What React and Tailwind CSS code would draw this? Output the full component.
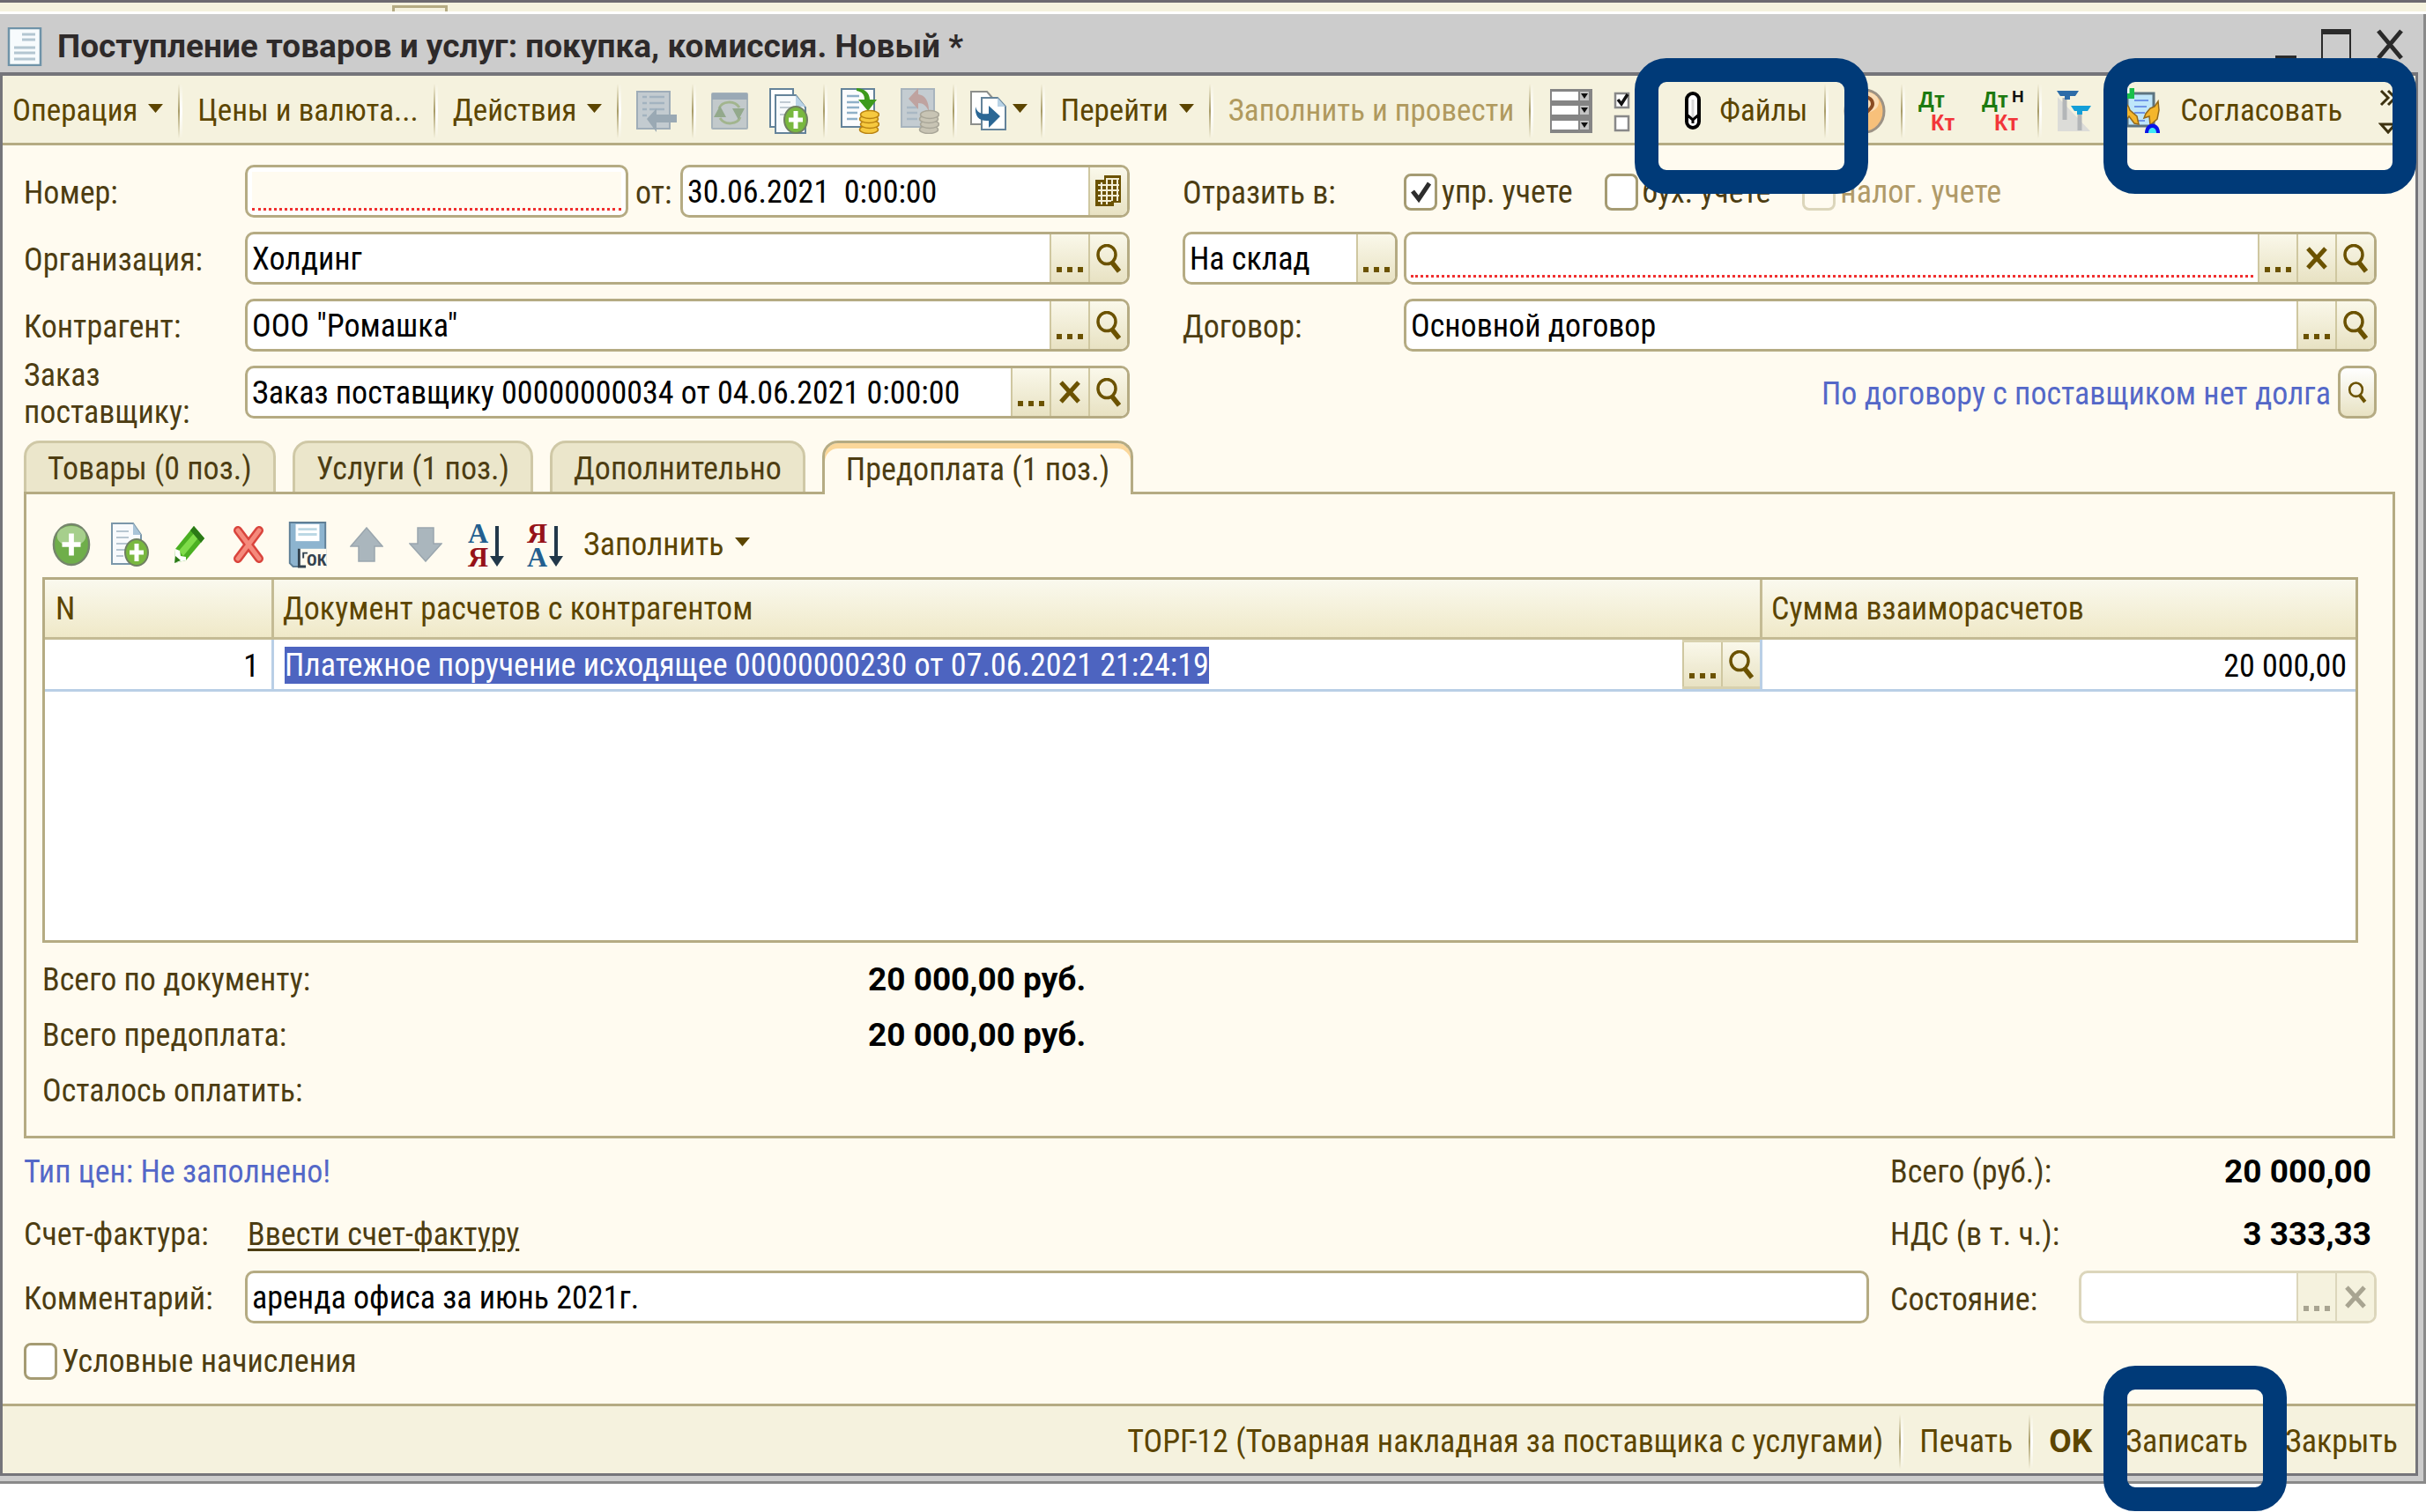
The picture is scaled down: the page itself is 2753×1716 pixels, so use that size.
const Caret = () => (
    <svg className="w-[17px] h-[10px] mb-[6px]" viewBox="0 0 17 10"><path d="M0 0h17L8.500 10z" fill="#5c4500" /></svg>
);

const Sep = () => (
    <span className="flex shrink-0 h-[62px]">
        <span className="w-[2px] bg-linear-to-b from-transparent via-[#a89c68] to-transparent"></span>
        <span className="w-[3px] bg-linear-to-b from-transparent via-white to-transparent"></span>
    </span>
);

const PostIcon = () => (
    <svg className="w-[46px] h-[50px]" viewBox="0 0 46 50">
        <path d="M1 3h37v42H1z" fill="#c3cbd0" stroke="#9fadb8" strokeWidth="2" />
        <path d="M7 9h5M15 9h17M7 16h5M15 16h17M7 23h5M15 23h17M7 30h5" stroke="#a3b3c0" strokeWidth="2.500" />
        <path d="M12 34 23 22v7h23v9H23v11z" fill="#9aa9b4" />
    </svg>
);

const RefreshIcon = () => (
    <svg className="w-[42px] h-[50px]" viewBox="0 0 42 50">
        <rect x="1" y="5" width="40" height="40" rx="1" fill="#c2c9cb" stroke="#a7b3ba" strokeWidth="2" />
        <path d="M1 5h40v7H1z" fill="#9aa9b5" />
        <path d="M9 22c3-8 17-10 23-1M33 32c-3 8-17 10-23 1" fill="none" stroke="#a2b58e" strokeWidth="3" />
        <path d="M3 32 10 19l7 13zM24 22h14l-7 13z" fill="#93a98c" />
    </svg>
);

const PlusBadge = ({ cx, cy, rx, ry }) => (
    <g>
        <ellipse cx={cx} cy={cy} rx={rx} ry={ry} fill="#79b83f" stroke="#6f7f62" strokeWidth="2" />
        <path d={`M${cx - rx + 5} ${cy}H${cx + rx - 5}M${cx} ${cy - ry + 5}V${cy + ry - 5}`} stroke="#fff" strokeWidth="5" />
    </g>
);

const CopyIcon = () => (
    <svg className="w-[44px] h-[52px]" viewBox="0 0 44 52">
        <path d="M1 1h26v43H1z" fill="#fff" stroke="#64839a" strokeWidth="2" />
        <path d="M7 8h23l11 14v29H7z" fill="#f7fafc" stroke="#64839a" strokeWidth="2" />
        <path d="M30 8v13h11z" fill="#b9d3e6" />
        <path d="M12 16h12M12 22h14M12 30h8" stroke="#c1cbd3" strokeWidth="2" />
        <PlusBadge cx={30} cy={36} rx={13} ry={15} />
    </svg>
);

const Coins = ({ fill, line }) => (
    <g fill={fill} stroke={line} strokeWidth="1.500">
        <ellipse cx="32" cy="47" rx="10.500" ry="4.500" />
        <ellipse cx="33" cy="41" rx="10.500" ry="4.500" />
        <ellipse cx="32" cy="35" rx="10.500" ry="4.500" />
        <ellipse cx="33" cy="30" rx="10.500" ry="4.500" />
    </g>
);

const PostCoinsIcon = () => (
    <svg className="w-[44px] h-[52px]" viewBox="0 0 44 52">
        <path d="M1 1h37v43H1z" fill="#fbfcfd" stroke="#64839a" strokeWidth="2" />
        <path d="M7 9h14M7 16h14M7 22h14M7 28h12M7 35h12" stroke="#8fb0c8" strokeWidth="2.500" />
        <path d="M18 0c8 0 15 5 15 13h8L31 26 20 13h7c0-6-3-9-9-10z" fill="#3d9a1c" />
        <Coins fill="#f6c93f" line="#b98312" />
    </svg>
);

const UnpostIcon = () => (
    <svg className="w-[44px] h-[52px]" viewBox="0 0 44 52">
        <path d="M1 1h37v43H1z" fill="#c4ccd1" stroke="#a8b4bd" strokeWidth="2" />
        <path d="M7 22h12M7 28h12M7 35h12" stroke="#a9b8c4" strokeWidth="2.500" />
        <path d="M9 12 20 0v7c8 1 12 8 12 19-3-6-6-9-12-9v7z" fill="#bfa3a0" />
        <Coins fill="#c8c4b4" line="#a9a698" />
    </svg>
);

const BasedOnIcon = () => (
    <svg className="w-[42px] h-[46px]" viewBox="0 0 42 46">
        <path d="M1 1h18l7 8v29H1z" fill="#fff" stroke="#8d8f8c" strokeWidth="2" />
        <path d="M13 8h18l9 10v26H13z" fill="#fff" stroke="#64839a" strokeWidth="2" />
        <path d="M31 8v10h9z" fill="#b9d3e6" />
        <path d="M6 18c2 8 8 9 15 8v-9l13 12-13 13v-8C10 35 5 29 6 18z" fill="#2b6795" />
    </svg>
);

const ListIcon = () => (
    <svg className="w-[48px] h-[50px]" viewBox="0 0 48 50">
        <path d="M0 0h48v50H0z" fill="#858585" />
        <path d="M2 3h30v10H2zM2 19h30v10H2zM2 36h30v10H2z" fill="#fff" />
        <path d="M34 3h10v10H34zM34 19h10v10H34zM34 36h10v10H34z" fill="#c4c4c4" />
        <path d="M35 5h8l-4 6zM35 21h8l-4 6zM35 38h8l-4 6z" fill="#111" />
    </svg>
);

const FlagsIcon = () => (
    <svg className="w-[48px] h-[50px]" viewBox="0 0 48 50">
        <path d="M2 5h15v16H2zM2 31h15v16H2z" fill="#fff" stroke="#888" strokeWidth="2.500" />
        <path d="m5 12 4 5 7-11" fill="none" stroke="#111" strokeWidth="3.500" />
        <path d="M25 6h20M25 13h20M25 20h20M25 32h20M25 39h20M25 46h20" stroke="#1d4fb5" strokeWidth="3" />
    </svg>
);

const ClipIcon = () => (
    <svg className="w-[20px] h-[44px]" viewBox="0 0 20 44">
        <rect x="3" y="2" width="14" height="39" rx="7" fill="#fff" stroke="#000" strokeWidth="4" />
        <path d="M10 9v20" stroke="#d8d8d8" strokeWidth="3" />
        <path d="m3 26 7 6 7-6M10 32v4" fill="none" stroke="#000" strokeWidth="3" />
    </svg>
);

const HelpIcon = () => (
    <svg className="w-[48px] h-[52px]" viewBox="0 0 48 52">
        <ellipse cx="24" cy="26" rx="22" ry="24" fill="#f7c07a" stroke="#9c9285" strokeWidth="3" />
        <ellipse cx="24" cy="16" rx="16" ry="12" fill="#fbdcb4" />
        <path d="M16 19c0-12 17-11 17-1 0 7-9 7-9 15M24 37v5" fill="none" stroke="#8a4b22" strokeWidth="4" />
    </svg>
);

const DtKt = ({ extra }) => (
    <svg className="w-[48px] h-[52px] overflow-visible" viewBox="0 0 48 52" fontFamily="Liberation Sans, sans-serif" fontWeight="700" fontSize="25">
        <text x="0" y="22" fill="#1c7a10">Дт</text>
        <text x="14" y="48" fill="#f2363a">Кт</text>
        {extra && <text x="34" y="16" fontSize="19" fill="#111">Н</text>}
    </svg>
);

const TtIcon = () => (
    <svg className="w-[42px] h-[48px]" viewBox="0 0 42 48">
        <path d="M3 8 40 47H3z" fill="#dcdcd8" />
        <path d="M11 9v25M28 24v22" stroke="#b3b6b8" strokeWidth="5" />
        <path d="M2 1h25l-4 6h-6v4h-6V7H6z" fill="#2d6ca8" />
        <path d="M18 18h23l-4 6h-6v4h-6v-4h-3z" fill="#139fd8" />
    </svg>
);

const ApproveIcon = () => (
    <svg className="w-[56px] h-[52px]" viewBox="0 0 56 52">
        <path d="M16 6h30v37H16z" fill="#bfe6fa" stroke="#5d7480" strokeWidth="3" />
        <path d="M24 14h16M24 21h14M24 28h12M22 37h14" stroke="#6f95e8" strokeWidth="2" />
        <path d="M4 0h20v12H8L4 7z" fill="#19c04a" />
        <path d="M17 0v6" stroke="#fff" strokeWidth="3" />
        <path d="M12 14c3 4 6 6 7 11l8 7 2 9-5-1-6-8-6 8V14zM51 15l-4 6-5 2-5 6-2 5 6-2 1 10 8-7 2-10z" fill="#f4b62c" stroke="#94691a" strokeWidth="1.500" />
        <path d="M36 51c0-14 17-14 17 0z" fill="#0a12e8" />
        <path d="M40 51c0-8 9-8 9 0z" fill="#3fe9f6" />
    </svg>
);

const AddIcon = () => (
    <svg className="w-[46px] h-[52px]" viewBox="0 0 46 52">
        <ellipse cx="23" cy="26" rx="21" ry="24" fill="#6fae4a" stroke="#75856c" strokeWidth="2.500" />
        <ellipse cx="23" cy="16" rx="17" ry="12" fill="#a6cf8c" />
        <path d="M12 26h22M23 13v26" stroke="#fff" strokeWidth="6" />
    </svg>
);

const AddCopyIcon = () => (
    <svg className="w-[44px] h-[50px]" viewBox="0 0 44 50">
        <path d="M1 1h24l9 13v33H1z" fill="#f8fafc" stroke="#7b97aa" strokeWidth="2" />
        <path d="M25 1v13h9z" fill="#a9c4d8" />
        <path d="M6 10h14M6 17h14M6 24h14M6 31h10M6 38h8" stroke="#b7c6d1" strokeWidth="2" />
        <PlusBadge cx={29} cy={34} rx={13} ry={15} />
    </svg>
);

const EditIcon = () => (
    <svg className="w-[36px] h-[44px]" viewBox="0 0 36 44">
        <path d="m1 43 1-16L23 1l12 14-21 25z" fill="#4bb022" />
        <path d="m6 29 19-22 5 5-19 23z" fill="#7fdc4a" />
        <path d="m1 43 1-16 5 2 1 6 6 1v4z" fill="#fff" />
        <path d="m1 43 1-8 6 5zM23 1l12 14-4 5L19 6z" fill="#2b7a16" />
    </svg>
);

const DeleteIcon = () => (
    <svg className="w-[34px] h-[42px]" viewBox="0 0 34 42">
        <path d="M5 5 29 37M29 5 5 37" stroke="#d9443c" strokeWidth="10" strokeLinecap="round" />
        <path d="M5 5 29 37M29 5 5 37" stroke="#f58a7c" strokeWidth="5" strokeLinecap="round" />
    </svg>
);

const SaveIcon = () => (
    <svg className="w-[44px] h-[52px] overflow-visible" viewBox="0 0 44 54" fontFamily="Roboto Condensed, Roboto, sans-serif" fontSize="20" fontWeight="700">
        <path d="M1 1h42v52H5l-4-4z" fill="#8db4cf" stroke="#5f7f96" strokeWidth="2" />
        <path d="M8 3h28v20H8z" fill="#fff" />
        <path d="M11 9h22M11 15h22" stroke="#bcd8e4" strokeWidth="3" />
        <path d="M12 32h32v22H12z" fill="#fffbf0" />
        <path d="M12 32v21h8" fill="none" stroke="#33424e" strokeWidth="3" />
        <path d="M16 37h6M17 37v6" stroke="#33424e" strokeWidth="2" />
        <text x="21" y="52" fill="#33424e">ОК</text>
    </svg>
);

const ArrowIcon = ({ down }) => (
    <svg className="w-[38px] h-[40px]" viewBox="0 0 38 40">
        <path d={down ? "M10 1h18v18h9L19 39 1 19h9z" : "M10 39h18V22h9L19 1 1 22h9z"} fill="#aab6bd" stroke="#9aa6ae" strokeWidth="1.500" />
    </svg>
);

const SortIcon = ({ desc }) => (
    <svg className="w-[42px] h-[54px] overflow-visible" viewBox="0 0 42 54" fontFamily="Liberation Serif, serif" fontSize="32" fontWeight="700">
        <text x="2" y="25" fill={desc ? "#961218" : "#235f8f"}>{desc ? "Я" : "А"}</text>
        <text x="2" y="52" fill={desc ? "#235f8f" : "#961218"}>{desc ? "А" : "Я"}</text>
        <path d="M35 6v36" stroke="#22384a" strokeWidth="4" />
        <path d="M27 40h16l-8 12z" fill="#22384a" />
    </svg>
);

const SearchGlyph = ({ small }) => (
    <svg className={small ? "w-[22px] h-[25px]" : "w-[30px] h-[33px]"} viewBox="0 0 30 33">
        <ellipse cx="13" cy="12" rx="10" ry="10.500" fill="none" stroke="#6b5200" strokeWidth="3.500" />
        <path d="m19 21 8 10" stroke="#6b5200" strokeWidth="5.500" />
    </svg>
);

const CrossGlyph = () => (
    <svg className="w-[24px] h-[26px]" viewBox="0 0 24 26"><path d="m2 2 20 22M22 2 2 24" stroke="currentColor" strokeWidth="5" /></svg>
);

const CalendarGlyph = () => (
    <svg className="w-[30px] h-[36px]" viewBox="0 0 30 36">
        <path d="M10 0h19v31h-8v4H0V5h10z" fill="#6b5200" />
        <path d="M3 11h24M3 17h24M3 23h24M3 29h15M12 4h15M7 8v25M13 4v29M19 4v25M25 4v25" stroke="#f3eed6" strokeWidth="2" />
    </svg>
);

const Dots = () => (
    <svg className="w-[30px] h-[32px]" viewBox="0 0 30 32"><path d="M0 26h6v6H0zM12 26h6v6h-6zM24 26h6v6h-6z" fill="currentColor" /></svg>
);

const fieldButtons = {
    dots: { title: "Выбрать", icon: <Dots /> },
    clear: { title: "Очистить", icon: <CrossGlyph /> },
    open: { title: "Открыть", icon: <SearchGlyph /> },
    calendar: { title: "Календарь", icon: <CalendarGlyph /> },
};

const FieldButtons = ({ names, disabled }) => names.map((name) => (
    <button
        key={name}
        aria-label={fieldButtons[name].title}
        disabled={disabled}
        className={`${disabled ? "bg-[#f5f2de] text-[#a8a491] border-[#dcd6bb]" : "bg-linear-to-b from-[#faf8ea] to-[#e8e2c3] text-[#6b5200] border-[#cfc7a0]"} w-11 shrink-0 border-l-2 flex items-center justify-center`}
    >
        {fieldButtons[name].icon}
    </button>
));

const Field = ({ id, label, value = "", buttons = [], required, muted, disabled, className = "" }) => (
    <div className={`${disabled ? "border-[#dcd6bb]" : "border-[#b5ab83]"} h-[60px] flex border-3 rounded-[10px] overflow-hidden bg-white ${className}`}>
        <div className="flex-1 min-w-0 flex p-[5px]">
            <input
                id={id}
                aria-label={label}
                defaultValue={value}
                disabled={disabled}
                className={`${required ? "border-b-3 border-dotted border-[#f03030]" : "pt-[2px]"} ${muted ? "bg-[#fffbf0]" : "bg-white"} w-full min-w-0 text-black outline-none`}
            />
        </div>
        <FieldButtons names={buttons} disabled={disabled} />
    </div>
);

const Check = ({ label, checked, disabled }) => (
    <label className={`${disabled ? "text-[#b09a68]" : ""} flex items-center gap-[5px] pt-[2px]`}>
        <span className="relative flex">
            <input
                type="checkbox"
                defaultChecked={checked}
                disabled={disabled}
                className={`${disabled ? "border-[#dcd6bb] bg-[#fffbf0]" : "border-[#a59b73] bg-white"} appearance-none w-[38px] h-[42px] border-3 rounded-[8px]`}
            />
            {checked && (
                <svg className="absolute left-[8px] top-[9px] w-[24px] h-[24px]" viewBox="0 0 24 24"><path d="m2 11 7 9L21 2" fill="none" stroke="#2d2d2d" strokeWidth="5" /></svg>
            )}
        </span>
        {label}
    </label>
);

const Label = ({ htmlFor, children, className = "" }) => (
    <label htmlFor={htmlFor} className={`w-[251px] shrink-0 pt-[3px] ${className}`}>{children}</label>
);

const Group = ({ children, className = "px-[17px]" }) => (
    <div className={`flex items-center gap-6 ${className}`}>{children}</div>
);

const Tool = ({ title, children, className = "" }) => (
    <button aria-label={title} className={`flex shrink-0 items-center justify-center ${className}`}>{children}</button>
);

const MenuButton = ({ children }) => (
    <button className="flex items-center gap-[12px] whitespace-nowrap">{children}<Caret /></button>
);

const Highlight = ({ className }) => (
    <div className={`absolute pointer-events-none border-[27px] border-[#003a78] rounded-[36px] ${className}`}></div>
);

const tabs = ["Товары (0 поз.)", "Услуги (1 поз.)", "Дополнительно", "Предоплата (1 поз.)"];

const rowTools = [
    { title: "Добавить", icon: <AddIcon /> },
    { title: "Добавить копированием", icon: <AddCopyIcon /> },
    { title: "Изменить", icon: <EditIcon /> },
    { title: "Удалить", icon: <DeleteIcon /> },
    { title: "Закончить редактирование", icon: <SaveIcon /> },
    { title: "Переместить вверх", icon: <ArrowIcon /> },
    { title: "Переместить вниз", icon: <ArrowIcon down /> },
    { title: "Сортировать по возрастанию", icon: <SortIcon /> },
    { title: "Сортировать по убыванию", icon: <SortIcon desc /> },
];

const totals = [
    { text: "Всего по документу:", value: "20 000,00 руб." },
    { text: "Всего предоплата:", value: "20 000,00 руб." },
    { text: "Осталось оплатить:", value: "" },
];

const TitleBar = () => (
    <header className="h-[66px] pt-2 flex items-center pl-2 pr-[22px]">
        <svg className="w-[40px] h-[44px]" viewBox="0 0 40 44">
            <path d="M2 1h36v42H2z" fill="#f7fbfd" stroke="#6f93a8" strokeWidth="2.500" />
            <path d="M17 8h15M17 14h15M8 23h24M8 29h24M8 36h24" stroke="#b3c6d1" strokeWidth="3" />
        </svg>
        <h1 className="flex-1 pl-[17px] font-[Roboto] font-bold text-[37px] text-[#2e2a2a]">
            Поступление товаров и услуг: покупка, комиссия. Новый *
        </h1>
        <div className="flex items-end gap-[28px] pb-[6px] text-[#2a2a2a]">
            <button aria-label="Свернуть" className="w-[24px] h-[5px] bg-[#2a2a2a]"></button>
            <button aria-label="Развернуть" className="w-[34px] h-[35px] border-2 border-t-6 border-[#2a2a2a]"></button>
            <button aria-label="Закрыть окно">
                <svg className="w-[32px] h-[35px]" viewBox="0 0 32 35"><path d="m3 2 26 31M29 2 3 33" stroke="currentColor" strokeWidth="5" /></svg>
            </button>
        </div>
    </header>
);

const Toolbar = () => (
    <nav className="h-[79px] pt-1 flex items-center bg-[#f5f2de] border-b-3 border-[#b5ab83] text-[#5c4500] text-[35px]">
        <Group className="pl-[11px] pr-[17px]"><MenuButton>Операция</MenuButton></Group>
        <Sep />
        <Group><button className="whitespace-nowrap">Цены и валюта...</button></Group>
        <Sep />
        <Group><MenuButton>Действия</MenuButton></Group>
        <Sep />
        <Group><Tool title="Провести"><PostIcon /></Tool></Group>
        <Sep />
        <Group>
            <Tool title="Обновить"><RefreshIcon /></Tool>
            <Tool title="Скопировать"><CopyIcon /></Tool>
        </Group>
        <Sep />
        <Group className="px-[15px]">
            <Tool title="Провести документ"><PostCoinsIcon /></Tool>
            <Tool title="Отменить проведение"><UnpostIcon /></Tool>
        </Group>
        <Sep />
        <Group className="px-[15px]">
            <button aria-label="Ввести на основании" className="flex items-center gap-[6px]"><BasedOnIcon /><Caret /></button>
        </Group>
        <Sep />
        <Group><MenuButton>Перейти</MenuButton></Group>
        <Sep />
        <Group><button className="whitespace-nowrap text-[#b09a5e]">Заполнить и провести</button></Group>
        <Sep />
        <Group className="px-[19px]">
            <Tool title="Список"><ListIcon /></Tool>
            <Tool title="Флажки"><FlagsIcon /></Tool>
            <button className="flex items-center gap-5 pl-2">
                <ClipIcon />Файлы
            </button>
        </Group>
        <Sep />
        <Group><Tool title="Справка"><HelpIcon /></Tool></Group>
        <Sep />
        <Group className="px-[15px]">
            <Tool title="Проводки"><DtKt /></Tool>
            <Tool title="Проводки НУ"><DtKt extra /></Tool>
        </Group>
        <Sep />
        <Group className="pl-[15px] pr-[22px] flex-1">
            <Tool title="Шрифт"><TtIcon /></Tool>
            <button className="flex items-center gap-5"><ApproveIcon />Согласовать</button>
            <button aria-label="Ещё" className="ml-auto">
                <svg className="w-[20px] h-[54px]" viewBox="0 0 20 54"><path d="m3 4 8 8-8 8M11 4l8 8-8 8M3 42h16l-8 9z" fill="none" stroke="#3d3210" strokeWidth="3" /></svg>
            </button>
        </Group>
    </nav>
);

const DocumentForm = () => (
    <section className="grid grid-cols-[1255fr_1355fr] gap-x-[60px] pr-[44px]">
        <div className="flex flex-col gap-4">
            <div className="flex items-center">
                <Label htmlFor="number">Номер:</Label>
                <Field id="number" required muted className="w-[435px]" />
                <label htmlFor="date" className="pl-2 pr-[7px] w-[59px] pt-[3px]">от:</label>
                <Field id="date" value="30.06.2021  0:00:00" buttons={["calendar"]} className="flex-1" />
            </div>
            <div className="flex items-center">
                <Label htmlFor="org">Организация:</Label>
                <Field id="org" value="Холдинг" buttons={["dots", "open"]} className="flex-1" />
            </div>
            <div className="flex items-center">
                <Label htmlFor="partner">Контрагент:</Label>
                <Field id="partner" value={'ООО "Ромашка"'} buttons={["dots", "open"]} className="flex-1" />
            </div>
            <div className="flex items-center h-[60px]">
                <Label htmlFor="order" className="pr-10">Заказ поставщику:</Label>
                <Field id="order" value="Заказ поставщику 00000000034 от 04.06.2021 0:00:00" buttons={["dots", "clear", "open"]} className="flex-1" />
            </div>
        </div>
        <div className="flex flex-col gap-4">
            <div className="flex items-center h-[60px]">
                <span className="w-[251px] pt-[3px]">Отразить в:</span>
                <div className="flex gap-9">
                    <Check label="упр. учете" checked />
                    <Check label="бух. учете" />
                    <Check label="налог. учете" disabled />
                </div>
            </div>
            <div className="flex items-center gap-[7px]">
                <Field label="Место приема" value="На склад" buttons={["dots"]} className="w-[244px]" />
                <Field label="Склад" required buttons={["dots", "clear", "open"]} className="flex-1" />
            </div>
            <div className="flex items-center">
                <Label htmlFor="contract">Договор:</Label>
                <Field id="contract" value="Основной договор" buttons={["dots", "open"]} className="flex-1" />
            </div>
            <div className="flex items-center justify-end gap-2 text-[#5468c8]">
                <span className="pt-[3px]">По договору с поставщиком нет долга</span>
                <button aria-label="Открыть долг" className="w-11 h-[60px] flex items-center justify-center border-3 border-[#b5ab83] rounded-[10px] bg-linear-to-b from-white to-[#e8e2c3]">
                    <SearchGlyph small />
                </button>
            </div>
        </div>
    </section>
);

const PrepaymentTable = () => (
    <div className="h-[415px] bg-white border-3 border-[#b5ab83]">
        <table className="w-full table-fixed border-separate border-spacing-0">
            <thead>
                <tr className="h-[68px] text-left text-[#5c4500] bg-linear-to-b from-[#faf9ee] to-[#efe8c6]">
                    <th className="w-[260px] pl-3 font-normal border-b-3 border-r-3 border-[#c4bb94]">N</th>
                    <th className="pl-[10px] font-normal border-b-3 border-r-3 border-[#c4bb94]">Документ расчетов с контрагентом</th>
                    <th className="w-[673px] pl-[10px] font-normal border-b-3 border-[#c4bb94]">Сумма взаиморасчетов</th>
                </tr>
            </thead>
            <tbody>
                <tr className="h-[59px] text-black">
                    <td className="p-0 pt-1 pr-[14px] text-right border-b-3 border-r-3 border-[#b9cfe6]">1</td>
                    <td className="p-0 border-b-3 border-r-3 border-[#b9cfe6]">
                        <div className="flex items-center justify-between h-[56px] pl-3">
                            <input
                                aria-label="Документ расчетов"
                                defaultValue="Платежное поручение исходящее 00000000230 от 07.06.2021 21:24:19"
                                className="field-sizing-content h-[42px] mt-[2px] bg-[#4d64c0] text-white outline-none"
                            />
                            <div className="flex h-full border-y-3 border-[#d8d1ae]">
                                <FieldButtons names={["dots", "open"]} />
                            </div>
                        </div>
                    </td>
                    <td className="p-0 pt-1 pr-[10px] text-right border-b-3 border-[#b9cfe6]">20 000,00</td>
                </tr>
            </tbody>
        </table>
    </div>
);

const TabPanel = () => (
    <section className="mt-[25px] mr-[23px]">
        <div role="tablist" className="flex gap-[19px]">
            {tabs.map((tab, index) => (
                <button
                    key={tab}
                    role="tab"
                    aria-selected={index === 3}
                    className={`${index === 3 ? "bg-[#fffbf0] border-[#b5ab83] -mb-[3px] h-[61px] shadow-[inset_0_6px_0_#fbd79a]" : "bg-[#ebe6cb] border-[#cfc8a6] h-[58px]"} px-6 pt-[2px] border-3 border-b-0 rounded-t-[18px]`}
                >
                    {tab}
                </button>
            ))}
        </div>
        <div className="border-3 border-[#b5ab83] pt-[30px] pb-5 pl-[18px] pr-[39px]">
            <div className="h-[54px] mb-[10px] pl-[11px] flex items-center gap-[23px] text-[#5c4500]">
                {rowTools.map((tool) => (
                    <Tool key={tool.title} title={tool.title} className="w-11">{tool.icon}</Tool>
                ))}
                <MenuButton>Заполнить</MenuButton>
            </div>
            <PrepaymentTable />
            <dl className="pt-[10px]">
                {totals.map((total) => (
                    <div key={total.text} className="flex items-center h-[63px]">
                        <dt className="w-[937px]">{total.text}</dt>
                        <dd className="font-[Roboto] font-bold text-[37px] text-black">{total.value}</dd>
                    </div>
                ))}
            </dl>
        </div>
    </section>
);

const Summary = () => (
    <section className="flex gap-6 pt-2 pb-5 pr-[44px]">
        <div className="flex-1 flex flex-col gap-[11px]">
            <p className="h-[60px] flex items-center text-[#5468c8]">Тип цен: Не заполнено!</p>
            <div className="h-[60px] flex items-center">
                <span className="w-[254px]">Счет-фактура:</span>
                <a href="#" className="underline underline-offset-4 decoration-3">Ввести счет-фактуру</a>
            </div>
            <div className="flex items-center">
                <Label htmlFor="comment">Комментарий:</Label>
                <Field id="comment" value="аренда офиса за июнь 2021г." className="flex-1" />
            </div>
            <div className="h-[60px] flex items-center pt-[2px]"><Check label="Условные начисления" /></div>
        </div>
        <div className="w-[552px] flex flex-col gap-[11px]">
            <div className="h-[60px] flex items-center justify-between pr-[6px]">
                <span>Всего (руб.):</span>
                <b className="font-[Roboto] text-[37px] text-black">20 000,00</b>
            </div>
            <div className="h-[60px] flex items-center justify-between pr-[6px]">
                <span>НДС (в т. ч.):</span>
                <b className="font-[Roboto] text-[37px] text-black">3 333,33</b>
            </div>
            <div className="flex items-center justify-between">
                <label htmlFor="state" className="pt-[6px]">Состояние:</label>
                <Field id="state" disabled buttons={["dots", "clear"]} className="w-[338px]" />
            </div>
        </div>
    </section>
);

const Footer = () => (
    <footer className="h-[79px] pt-1 flex items-center justify-end bg-[#f5f2de] border-t-3 border-[#b5ab83] text-[#5c4500] pr-5">
        <button>ТОРГ-12 (Товарная накладная за поставщика с услугами)</button>
        <span className="px-[18px]"><Sep /></span>
        <button>Печать</button>
        <span className="px-[18px]"><Sep /></span>
        <button className="font-[Roboto] font-bold text-[37px]">OK</button>
        <button className="pl-[38px] pr-[42px]">Записать</button>
        <button>Закрыть</button>
    </footer>
);

export default function App() {
    return (
        <div className="relative bg-white pb-[31px] font-['Roboto_Condensed','Roboto',sans-serif] text-[36px] leading-[42px] text-[#4d3d12]">
            <div className="h-[16px] border-t-3 border-[#6d6a70] bg-[#f5f2de] border-b-3 border-b-white flex">
                <div className="ml-[445px] mt-[3px] w-[63px] h-[7px] border-3 border-b-0 border-[#b5ab83]"></div>
            </div>
            <div className="bg-[#cccccc] border-r-3 border-b-3 border-[#8a8a8a] pb-[6px]">
                <TitleBar />
                <main className="mr-[6px] border-3 border-t-4 border-[#75757a] bg-[#fffbf0]">
                    <Toolbar />
                    <div className="pl-6 pt-[22px]">
                        <DocumentForm />
                        <TabPanel />
                        <Summary />
                    </div>
                    <Footer />
                </main>
            </div>
            <Highlight className="left-[1855px] top-[66px] w-[265px] h-[154px]" />
            <Highlight className="right-[11px] top-[66px] w-[355px] h-[154px]" />
            <Highlight className="right-[158px] bottom-0 w-[208px] h-[165px]" />
        </div>
    );
}
